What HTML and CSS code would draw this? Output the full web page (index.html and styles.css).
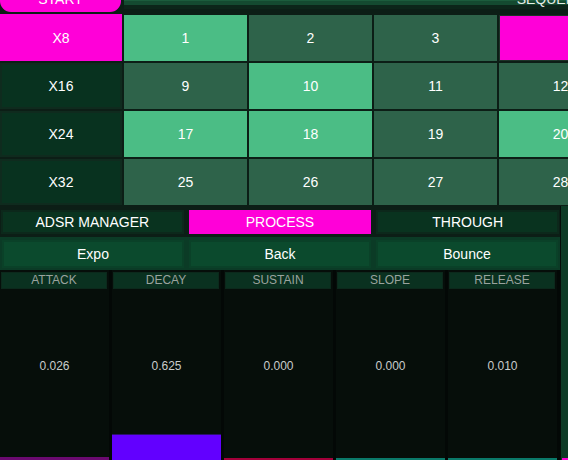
FILE: index.html
```html
<!DOCTYPE html>
<html lang="en">
<head>
<meta charset="utf-8">
<title>Sequencer</title>
<link rel="stylesheet" href="styles.css">
</head>
<body>
<div class="app">
  <div class="topbar">
    <div class="start">START</div>
    <div class="seq">SEQUENCER</div>
  </div>

  <div class="grid">
    <div class="lbl on">X8</div>
    <div class="cell lit">1</div>
    <div class="cell">2</div>
    <div class="cell">3</div>
    <div class="cell cur"></div>

    <div class="lbl">X16</div>
    <div class="cell">9</div>
    <div class="cell lit">10</div>
    <div class="cell">11</div>
    <div class="cell">12</div>

    <div class="lbl">X24</div>
    <div class="cell lit">17</div>
    <div class="cell lit">18</div>
    <div class="cell">19</div>
    <div class="cell lit">20</div>

    <div class="lbl">X32</div>
    <div class="cell">25</div>
    <div class="cell">26</div>
    <div class="cell">27</div>
    <div class="cell">28</div>
  </div>

  <div class="lower">
    <div class="main">
      <div class="modes">
        <div class="mode">ADSR MANAGER</div>
        <div class="mode active">PROCESS</div>
        <div class="mode">THROUGH</div>
      </div>
      <div class="curves">
        <div class="curve">Expo</div>
        <div class="curve">Back</div>
        <div class="curve">Bounce</div>
      </div>
      <div class="sliders">
        <div class="slider">
          <div class="sl-head">ATTACK</div>
          <div class="sl-body">
            <span class="sl-val">0.026</span>
            <div class="sl-fill fill-attack" style="height:3px"></div>
          </div>
        </div>
        <div class="slider">
          <div class="sl-head">DECAY</div>
          <div class="sl-body">
            <span class="sl-val">0.625</span>
            <div class="sl-fill fill-decay" style="height:26px"></div>
          </div>
        </div>
        <div class="slider">
          <div class="sl-head">SUSTAIN</div>
          <div class="sl-body">
            <span class="sl-val">0.000</span>
            <div class="sl-fill fill-sustain" style="height:2px"></div>
          </div>
        </div>
        <div class="slider">
          <div class="sl-head">SLOPE</div>
          <div class="sl-body">
            <span class="sl-val">0.000</span>
            <div class="sl-fill fill-slope" style="height:2px"></div>
          </div>
        </div>
        <div class="slider">
          <div class="sl-head">RELEASE</div>
          <div class="sl-body">
            <span class="sl-val">0.010</span>
            <div class="sl-fill fill-release" style="height:2px"></div>
          </div>
        </div>
      </div>
    </div>
    <div class="side">
      <div class="side-fill"></div>
    </div>
  </div>
</div>
</body>
</html>
```

FILE: styles.css
```css
html, body {
  margin: 0;
  padding: 0;
  overflow: hidden;
  background: #0c1e16;
}

body {
  font-family: "Liberation Sans", Arial, sans-serif;
  font-size: 14px;
  color: #ffffff;
}

.app {
  width: 568px;
  height: 460px;
  overflow: hidden;
}

/* top bar */
.topbar {
  display: flex;
  gap: 2px;
  margin-top: -14px;
  height: 26px;
  width: 1000px;
}

.start {
  flex: 0 0 121px;
  height: 26px;
  box-sizing: border-box;
  background: #ff00d8;
  border-radius: 0 0 11px 11px;
  text-align: center;
  line-height: 16px;
  padding-top: 5px;
}

.seq {
  flex: 0 0 874px;
  height: 19px;
  box-sizing: border-box;
  padding-top: 5px;
  line-height: 16px;
  background: #1b5c3c;
  border-bottom: 4px solid #144a30;
  box-shadow: 0 4px 0 #0c2519;
  text-align: center;
  color: #e8eee9;
  margin-left: 1px;
}

/* step grid */
.grid {
  display: grid;
  grid-template-columns: 122px repeat(4, 123px);
  grid-auto-rows: 46px;
  gap: 2px;
  margin-top: 3px;
  width: 622px;
}

.lbl,
.cell {
  display: flex;
  align-items: center;
  justify-content: center;
  box-sizing: border-box;
}

.lbl {
  background: #08321f;
  border: 2px solid #0f2b1e;
}

.lbl.on {
  background: #ff00d8;
  border-color: #ff00d8;
  margin-top: -1px;
}

.cell {
  background: #2e634a;
}

.cell.lit {
  background: #4bbd85;
}

.cell.cur {
  background: #ff00d8;
  border: 1px solid #1d3328;
}

/* lower area */
.lower {
  display: flex;
  gap: 1px;
  margin-top: 1px;
  width: 800px;
  background: #040a07;
}

.main {
  flex: 0 0 560px;
  display: flex;
  flex-direction: column;
  background: #0c1e16;
  padding-top: 4px;
}

.modes {
  display: grid;
  grid-template-columns: repeat(3, 1fr);
  gap: 5px;
  padding: 0 1px;
  height: 24px;
}

.mode {
  display: flex;
  align-items: center;
  justify-content: center;
  box-sizing: border-box;
  background: #09331f;
  border: 2px solid #0c281b;
}

.mode.active {
  background: #ff00d8;
  border-color: #ff00d8;
}

.curves {
  display: grid;
  grid-template-columns: repeat(3, 1fr);
  gap: 5px;
  margin-top: 3px;
  padding: 3px 2px 2px;
  height: 33px;
  box-sizing: border-box;
  background: #0b3b26;
}

.curve {
  display: flex;
  align-items: center;
  justify-content: center;
  box-sizing: border-box;
  background: #0b4a2d;
  border: 2px solid #0a4128;
}

.sliders {
  display: grid;
  grid-template-columns: repeat(5, 109px);
  gap: 3px;
  height: 190px;
  background: #030806;
}

.slider {
  display: flex;
  flex-direction: column;
  background: #060e0a;
}

.sl-head {
  margin: 2px 2px 0 1px;
  height: 17px;
  box-sizing: border-box;
  background: #0a3120;
  border: 1px solid #0c291c;
  color: #9aa39e;
  font-size: 12px;
  line-height: 15px;
  text-align: center;
}

.sl-body {
  flex: 1;
  display: grid;
}

.sl-val {
  grid-area: 1 / 1;
  place-self: center;
  margin-bottom: 17px;
  font-size: 12px;
  color: #c9cccb;
}

.sl-fill {
  grid-area: 1 / 1;
  align-self: end;
}

.fill-attack { background: #6a0a70; }
.fill-decay { background: #6200ff; border-top: 1px solid #2c1070; box-sizing: border-box; }
.fill-sustain { background: #a3003a; }
.fill-slope { background: #0a7a6a; }
.fill-release { background: #0a7a6a; }

.side {
  flex: 0 0 200px;
  display: flex;
  flex-direction: column;
  justify-content: flex-end;
  background: #0c3a25;
}

.side-fill {
  height: 2px;
  margin-left: 1px;
  background: #ff00d8;
}
```
